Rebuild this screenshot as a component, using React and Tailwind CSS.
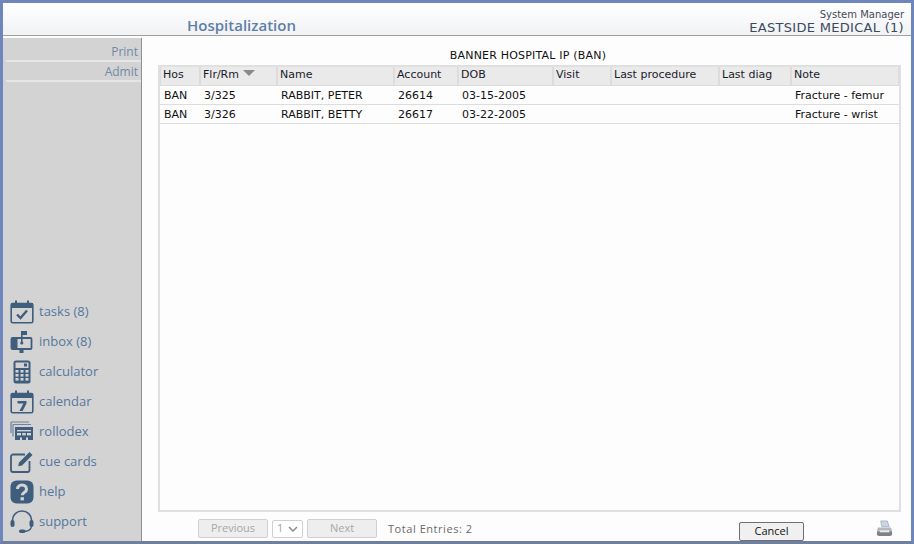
import React from 'react';

const font = "font-['Open_Sans',sans-serif]";
const tableFont = "font-['DejaVu_Sans',sans-serif]";

const columns = [
  { label: 'Hos', w: 'w-[38px]' },
  { label: 'Flr/Rm', w: 'w-[75px]', sort: true },
  { label: 'Name', w: 'w-[115px]' },
  { label: 'Account', w: 'w-[62px]' },
  { label: 'DOB', w: 'w-[93px]' },
  { label: 'Visit', w: 'w-[56px]' },
  { label: 'Last procedure', w: 'w-[106px]' },
  { label: 'Last diag', w: 'w-[70px]' },
  { label: 'Note', w: 'w-[106px]' },
];

const rows = [
  ['BAN', '3/325', 'RABBIT, PETER', '26614', '03-15-2005', '', '', '', 'Fracture - femur'],
  ['BAN', '3/326', 'RABBIT, BETTY', '26617', '03-22-2005', '', '', '', 'Fracture - wrist'],
];

const iconColor = '#3f5d7d';

const icons = {
  tasks: (
    <svg viewBox="0 0 24 24" className="w-[24px] h-[24px]">
      <rect x="1.2" y="3.5" width="21.6" height="19.3" rx="1.5" fill="none" stroke={iconColor} strokeWidth="1.6" />
      <rect x="1" y="3" width="22" height="5" fill={iconColor} />
      <rect x="5" y="0.5" width="2" height="5" fill={iconColor} />
      <rect x="17" y="0.5" width="2" height="5" fill={iconColor} />
      <path d="M7 14.5l3.5 3.5L17 10.5" fill="none" stroke={iconColor} strokeWidth="2.4" />
    </svg>
  ),
  inbox: (
    <svg viewBox="0 0 24 24" className="w-[24px] h-[24px]">
      <rect x="1.5" y="8" width="20" height="11" rx="1" fill="none" stroke={iconColor} strokeWidth="1.8" />
      <rect x="1.5" y="8" width="6" height="11" fill={iconColor} />
      <path d="M11 8V1h6v4h-5" fill={iconColor} />
      <rect x="11" y="1" width="1.6" height="12" fill={iconColor} />
      <circle cx="11.8" cy="13" r="1.6" fill={iconColor} />
      <rect x="9.5" y="19" width="4" height="4" fill={iconColor} />
    </svg>
  ),
  calculator: (
    <svg viewBox="0 0 24 24" className="w-[24px] h-[24px]">
      <rect x="3.5" y="0.5" width="17" height="23" rx="2.5" fill={iconColor} />
      <rect x="5.5" y="2.5" width="13" height="5.5" fill="#d3d3d3" />
      <rect x="14" y="3.5" width="3" height="3" fill={iconColor} />
      {[10, 14, 18].map((y) =>
        [5.5, 10.5, 15.5].map((x) => <rect key={`${x}-${y}`} x={x} y={y} width="3" height="2.6" fill="#d3d3d3" />)
      )}
    </svg>
  ),
  calendar: (
    <svg viewBox="0 0 24 24" className="w-[24px] h-[24px]">
      <rect x="1.2" y="3.5" width="21.6" height="19.3" rx="1.5" fill="none" stroke={iconColor} strokeWidth="1.6" />
      <rect x="1" y="3" width="22" height="5" fill={iconColor} />
      <rect x="5" y="0.5" width="2" height="5" fill={iconColor} />
      <rect x="17" y="0.5" width="2" height="5" fill={iconColor} />
      <path d="M7.5 11h9v2.4L12.6 21H9.4l4-7.4H7.5z" fill={iconColor} />
    </svg>
  ),
  rollodex: (
    <svg viewBox="0 0 24 24" className="w-[24px] h-[24px]">
      <path d="M1 2h18M1 2v11M3 4.5h18M3 4.5v12" fill="none" stroke="#6f8298" strokeWidth="1.2" />
      <rect x="5" y="7" width="18" height="13" fill={iconColor} />
      <rect x="7" y="10" width="14" height="1.4" fill="#d3d3d3" />
      <rect x="7" y="13" width="4" height="2.4" fill="#d3d3d3" />
      <rect x="12.2" y="13" width="3.6" height="2.4" fill="#d3d3d3" />
      <rect x="17" y="13" width="4" height="2.4" fill="#d3d3d3" />
      <rect x="10" y="17.5" width="2" height="2.5" fill="#d3d3d3" />
      <rect x="16" y="17.5" width="2" height="2.5" fill="#d3d3d3" />
    </svg>
  ),
  cue: (
    <svg viewBox="0 0 24 24" className="w-[24px] h-[24px]">
      <path d="M15 4.5H3a2 2 0 0 0-2 2V20a2 2 0 0 0 2 2h14.5a2 2 0 0 0 2-2V11" fill="none" stroke={iconColor} strokeWidth="1.8" />
      <path d="M9 12.5L19.5 2l3 3L12 15.5l-3.8.8z" fill={iconColor} />
    </svg>
  ),
  help: (
    <svg viewBox="0 0 24 24" className="w-[24px] h-[24px]">
      <rect x="0.5" y="0.5" width="23" height="23" rx="6" fill={iconColor} />
      <path d="M7.5 9a4.5 4 0 1 1 7 3.3c-1.5 1-2.2 1.5-2.2 3" fill="none" stroke="#d3d3d3" strokeWidth="3" />
      <rect x="10.5" y="17.2" width="3.4" height="3.2" fill="#d3d3d3" />
    </svg>
  ),
  support: (
    <svg viewBox="0 0 24 24" className="w-[24px] h-[24px]">
      <path d="M2.5 13V10a9.5 9 0 0 1 19 0v3" fill="none" stroke={iconColor} strokeWidth="1.6" />
      <rect x="0.5" y="10" width="4" height="7" rx="2" fill={iconColor} />
      <rect x="19.5" y="10" width="4" height="7" rx="2" fill={iconColor} />
      <path d="M21.5 16c0 3.5-3 5-7 5.5" fill="none" stroke={iconColor} strokeWidth="1.4" />
      <rect x="9" y="19.5" width="6.5" height="3.5" rx="1.7" fill={iconColor} />
    </svg>
  ),
};

const tools = [
  ['tasks', 'tasks (8)'],
  ['inbox', 'inbox (8)'],
  ['calculator', 'calculator'],
  ['calendar', 'calendar'],
  ['rollodex', 'rollodex'],
  ['cue', 'cue cards'],
  ['help', 'help'],
  ['support', 'support'],
];

const Sidebar = () => (
  <div className="w-[139px] shrink-0 mt-[2px] bg-[#d3d3d3] border-r border-[#8f8f8f] flex flex-col">
    <div className="pt-[4px] pl-[3px] text-[12px] text-[#6f8aa8] text-right">
      <div className="h-[20px] leading-[20px] pr-[3px] border-b-2 border-[#e6e6e6]">Print</div>
      <div className="h-[20px] leading-[20px] pr-[3px] border-b-2 border-[#e6e6e6]">Admit</div>
    </div>
    <div className="mt-auto pb-[4px] pl-[7px]">
      {tools.map(([key, label]) => (
        <div key={key} className="h-[30px] flex items-center gap-[5px]">
          {icons[key]}
          <span className="text-[13px] text-[#55779f]">{label}</span>
        </div>
      ))}
    </div>
  </div>
);

const Printer = () => (
  <svg viewBox="0 0 18 18" className="w-[17px] h-[17px]">
    <path d="M5 1h7l2 6H6z" fill="#c9d6e8" stroke="#8b98a8" strokeWidth="0.6" />
    <path d="M2 8h14l1 4H1z" fill="#b4b8bd" />
    <path d="M1 12h16v4l-2 1H3l-2-1z" fill="#7d8287" />
    <rect x="4" y="11" width="10" height="2" fill="#eeeeee" />
  </svg>
);

const PatientTable = () => (
  <div className="flex-1 ml-[16px] mr-[10px] border-2 border-[#e0e0e0] bg-[#fdfdfd] flex flex-col min-h-0">
    <div className={`${tableFont} flex gap-[2px] bg-[#dcdcdc] pl-[1px] h-[19px] pb-[1px]`}>
      {columns.map((c) => (
        <div key={c.label} className={`${c.w} shrink-0 bg-[#eaeaea] text-[11px] leading-[15px] pl-[2px] text-[#1a1a2a] flex items-start whitespace-nowrap`}>
          {c.label}
          {c.sort && <span className="ml-[4px] mt-[3px] w-0 h-0 border-l-[6px] border-r-[6px] border-t-[6px] border-l-transparent border-r-transparent border-t-[#8a8a8a]" />}
        </div>
      ))}
    </div>
    {rows.map((r) => (
      <div key={r[1]} className={`${tableFont} flex gap-[2px] pl-[1px] h-[19px] border-b border-[#dddddd]`}>
        {r.map((v, i) => (
          <div key={i} className={`${columns[i].w} shrink-0 text-[11px] leading-[20px] pl-[3px] text-[#111111] whitespace-nowrap`}>
            {v}
          </div>
        ))}
      </div>
    ))}
  </div>
);

export default function App() {
  return (
    <div className={`${font} w-[914px] h-[544px] bg-[#fdfdfd] border-[3px] border-[#6e86bb] border-b-[3px] border-b-[#6e7f9f] flex flex-col overflow-hidden`}>
      <div className="h-[33px] shrink-0 bg-gradient-to-b from-white to-[#f1f2f5] border-b border-[#a0a0a0] flex justify-between pl-[184px] pr-[7px]">
        <div className="text-[15px] font-semibold text-[#5f7fa6] pt-[12px] leading-[20px]">Hospitalization</div>
        <div className={`${tableFont} text-right pt-[5px]`}>
          <div className="text-[10px] leading-[13px] text-[#444a55]">System Manager</div>
          <div className="text-[13px] leading-[14px] tracking-[0.3px] text-[#3a4a5e] whitespace-nowrap">EASTSIDE MEDICAL (1)</div>
        </div>
      </div>
      <div className="flex-1 flex min-h-0">
        <Sidebar />
        <div className="flex-1 flex flex-col min-w-0">
          <div className={`${tableFont} h-[29px] shrink-0 pt-[11px] pl-[3px] text-center text-[11px] tracking-[0.2px] leading-[18px] text-[#111111]`}>
            BANNER HOSPITAL IP (BAN)
          </div>
          <PatientTable />
          <div className="h-[29px] shrink-0 flex items-center pt-[4px] pl-[56px] pr-[18px] text-[11px]">
            <button className="w-[70px] h-[19px] bg-[#eeeeee] border border-[#d0d0d0] rounded-[2px] text-[#a8a8a8]">Previous</button>
            <div className="ml-[4px] w-[31px] h-[18px] border border-[#d0d0d0] rounded-[2px] bg-white flex items-center justify-between px-[4px] text-[#a0a0a0]">
              1
              <svg viewBox="0 0 10 6" className="w-[10px] h-[6px]"><path d="M1 1l4 4 4-4" fill="none" stroke="#8a8a8a" strokeWidth="1.5" /></svg>
            </div>
            <button className="ml-[4px] w-[70px] h-[19px] bg-[#eeeeee] border border-[#d0d0d0] rounded-[2px] text-[#a8a8a8]">Next</button>
            <span className="ml-[11px] mt-[1px] text-[#6a6a6a] tracking-[0.55px]">Total Entries: 2</span>
            <button className="ml-auto mr-[72px] mt-[5px] w-[65px] h-[19px] bg-[#f0f0f0] border border-[#6f6f6f] rounded-[2px] text-[#111111]">Cancel</button>
            <Printer />
          </div>
        </div>
      </div>
    </div>
  );
}
